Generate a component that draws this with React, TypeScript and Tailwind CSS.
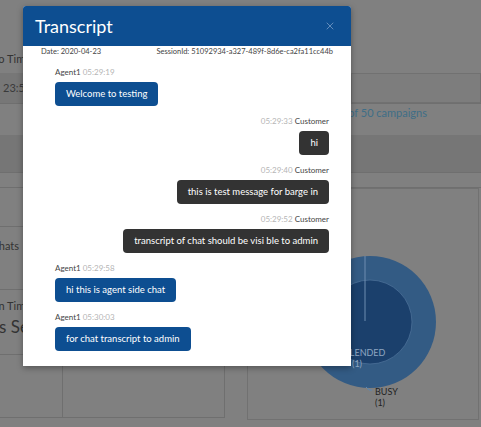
import { X } from 'lucide-react'

const messages = [
  { from: 'agent', name: 'Agent1', time: '05:29:19', text: 'Welcome to testing' },
  { from: 'customer', name: 'Customer', time: '05:29:33', text: 'hi' },
  { from: 'customer', name: 'Customer', time: '05:29:40', text: 'this is test message for barge in' },
  { from: 'customer', name: 'Customer', time: '05:29:52', text: 'transcript of chat should be visi ble to admin' },
  { from: 'agent', name: 'Agent1', time: '05:29:58', text: 'hi this is agent side chat' },
  { from: 'agent', name: 'Agent1', time: '05:30:03', text: 'for chat transcript to admin' },
]

function Donut() {
  return (
    <svg width="232" height="232" viewBox="0 0 232 232" className="block">
      <circle cx="122" cy="133" r="66" fill="#335b84" />
      <circle cx="122" cy="133" r="42" fill="#1b406c" stroke="#4a6f97" strokeWidth="0.8" />
      <line x1="117" y1="67" x2="117" y2="132" stroke="#6f8db0" strokeWidth="1" />
      <text x="96" y="167" fontSize="9" fill="#8ea6c2" fontFamily="Lato, sans-serif">BLENDED</text>
      <text x="104" y="178" fontSize="9" fill="#8ea6c2" fontFamily="Lato, sans-serif">(1)</text>
      <path d="M118 198 L121 201 L124 201" stroke="#5b86b3" strokeWidth="1" fill="none" />
      <text x="127" y="206" fontSize="9" fill="#222" fontFamily="Lato, sans-serif">BUSY</text>
      <text x="127" y="217" fontSize="9" fill="#222" fontFamily="Lato, sans-serif">(1)</text>
    </svg>
  )
}

export default function App() {
  return (
    <div className="relative h-[427px] w-[481px] overflow-hidden bg-[#808080] font-['Lato',sans-serif]">
      {/* page behind the overlay */}
      <div className="flex flex-col">
        <div className="h-[52px]" />
        <div className="flex h-[21px] w-[31px] justify-end whitespace-nowrap text-[11px] leading-[14px] text-[#333]">Go Time</div>
        <div className="flex h-[31px] border-b border-[#6f6f6f]">
          <div className="flex flex-1 items-center bg-[#777] pl-[3px] text-[11px] text-[#3a3a3a]">23:59:59</div>
          <div className="w-[130px] border border-[#717171] bg-[#7d7d7d]" />
        </div>
        <div className="flex h-[31px] justify-end pr-[54px] pt-[1px] text-[11px] text-[#3e6e87]">item of 50 campaigns</div>
        <div className="h-[38px] border-b border-[#6f6f6f] bg-[#767676]" />
        <div className="h-[15px] border-b border-[#6f6f6f]" />
        <div className="flex">
          <div className="flex w-[225px] flex-col">
            <div className="h-[39px] border-b border-[#6f6f6f]" />
            <div className="h-[63px] border-b border-[#6f6f6f] pt-[11px]">
              <div className="flex w-[19px] justify-end whitespace-nowrap text-[11px] text-[#333]">Chats</div>
            </div>
            <div className="h-[65px] border-b border-[#6f6f6f] pt-[9px] text-[#333]">
              <div className="flex w-[31px] justify-end whitespace-nowrap text-[11px] leading-[14px]">Session Time</div>
              <div className="-ml-[1px] pt-[3px] text-[17px] leading-[22px]">s Secs</div>
            </div>
            <div className="flex h-[63px] border-b border-[#6f6f6f]">
              <div className="w-[63px] border-r border-[#6f6f6f]" />
              <div className="flex-1 border-r border-[#6f6f6f]" />
            </div>
          </div>
          <div className="ml-[22px] mr-[2px] h-[232px] flex-1 overflow-hidden border border-[#717171]">
            <Donut />
          </div>
        </div>
      </div>

      {/* transcript modal */}
      <div className="absolute left-[23px] top-[6px] w-[328px] rounded-t-[3px] bg-white shadow-[0_2px_6px_rgba(0,0,0,0.35)]">
        <div className="flex h-[40px] items-center justify-between rounded-t-[3px] bg-[#0d4e91] pl-[12px] pr-[15px]">
          <span className="text-[18px] leading-none text-white">Transcript</span>
          <X size={12} strokeWidth={1.5} className="text-[#7fa2c9]" />
        </div>
        <div className="flex h-[12px] items-center justify-between px-[18px] text-[7.5px] text-[#444]">
          <span>Date: 2020-04-23</span>
          <span>SessionId: 51092934-a327-489f-8d6e-ca2fa11cc44b</span>
        </div>
        <div className="flex flex-col gap-[10px] pb-[15px] pl-[32px] pr-[22px] pt-[9px]">
          {messages.map((m, i) => {
            const isAgent = m.from === 'agent'
            return (
              <div key={i} className={`flex flex-col ${isAgent ? 'items-start' : 'items-end'}`}>
                <div className="h-[10px] text-[8px] leading-[10px] text-[#444]">
                  {isAgent ? (
                    <>
                      {m.name} <span className="text-[#b5b5b5]">{m.time}</span>
                    </>
                  ) : (
                    <>
                      <span className="text-[#b5b5b5]">{m.time}</span> {m.name}
                    </>
                  )}
                </div>
                <div
                  className={`mt-[5px] flex h-[24px] items-center rounded-[4px] px-[11px] text-[9.5px] text-white ${
                    isAgent ? 'bg-[#0d4e91]' : 'bg-[#333]'
                  }`}
                >
                  {m.text}
                </div>
              </div>
            )
          })}
        </div>
      </div>
    </div>
  )
}
